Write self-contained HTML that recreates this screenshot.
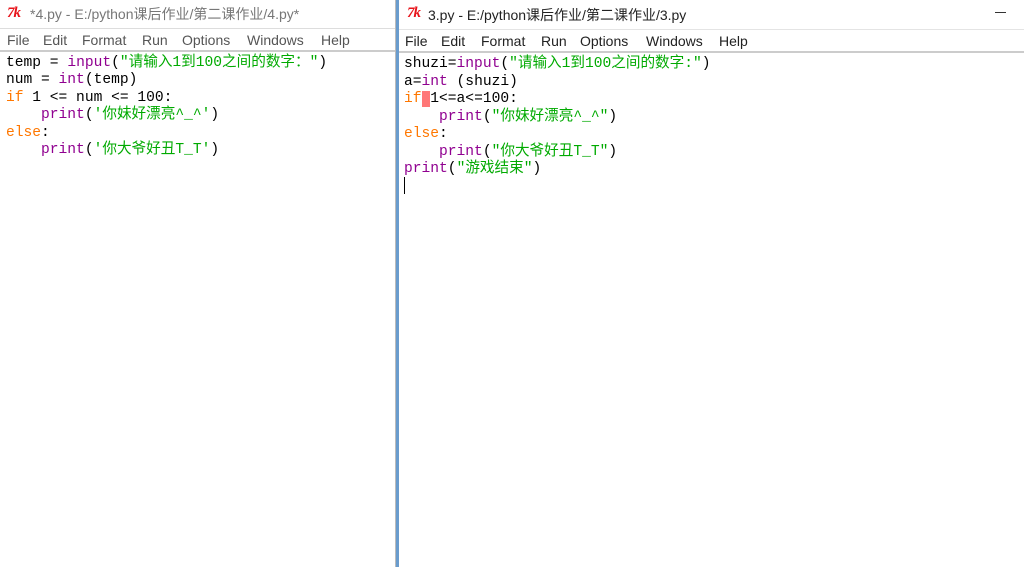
<!DOCTYPE html>
<html><head><meta charset="utf-8"><style>
*{margin:0;padding:0;box-sizing:border-box}
body{width:1024px;height:567px;overflow:hidden;background:#fff;position:relative;font-family:"Liberation Sans","Noto Sans CJK SC",sans-serif}
.win{position:absolute;top:0;height:567px;background:#fff}
.title{position:absolute;left:0;right:0;top:0;height:28px;font-size:14px;color:#222;white-space:nowrap}
.logo{position:absolute;top:5px;color:#e8141b;font-style:italic;font-weight:bold;font-family:"Liberation Serif",serif;font-size:15px;letter-spacing:-1px}
.menu{position:absolute;left:0;right:0;font-size:14px;color:#222;white-space:nowrap}
.menu span{position:absolute;top:3px}
.code{position:absolute;font-family:"Liberation Mono","Noto Sans CJK SC",monospace;white-space:pre;color:#000}
.code div{position:absolute;left:0;height:17px;line-height:17px}
.k{color:#ff7700}.b{color:#900090}.s{color:#00aa00}
</style></head><body>
<div class="win" style="left:0;width:397px;background:#fff">
 <div class="title" style="background:#fff;color:#777"><span class="logo" style="left:7px">7k</span><span style="position:absolute;left:30px;top:4px">*4.py - E:/python课后作业/第二课作业/4.py*</span></div>
 <div style="position:absolute;left:0;right:0;top:28px;height:1px;background:#ddd"></div>
 <div class="menu" style="top:29px;height:21px;background:#fff;color:#555">
  <span style="left:7px">File</span><span style="left:43px">Edit</span><span style="left:82px">Format</span><span style="left:142px">Run</span><span style="left:182px">Options</span><span style="left:247px">Windows</span><span style="left:321px">Help</span>
 </div>
 <div style="position:absolute;left:0;right:0;top:50px;height:2px;background:#ccc"></div>
 <div class="code" style="left:6px;top:55px;font-size:14.6px">
  <div style="top:0">temp = <span class="b">input</span>(<span class="s">"请输入1到100之间的数字："</span>)</div>
  <div style="top:17.4px">num = <span class="b">int</span>(temp)</div>
  <div style="top:34.8px"><span class="k">if</span> 1 &lt;= num &lt;= 100:</div>
  <div style="top:52.2px">    <span class="b">print</span>(<span class="s">'你妹好漂亮^_^'</span>)</div>
  <div style="top:69.6px"><span class="k">else</span>:</div>
  <div style="top:87px">    <span class="b">print</span>(<span class="s">'你大爷好丑T_T'</span>)</div>
 </div>
</div>
<div style="position:absolute;left:395px;top:0;width:1px;height:567px;background:#bbb"></div>
<div style="position:absolute;left:396px;top:0;width:3px;height:567px;background:#6a9ccd"></div>
<div class="win" style="left:399px;width:625px">
 <div class="title"><span class="logo" style="left:8px">7k</span><span style="position:absolute;left:29px;top:5px">3.py - E:/python课后作业/第二课作业/3.py</span></div>
 <div style="position:absolute;left:596px;top:12px;width:11px;height:1px;background:#333"></div>
 <div style="position:absolute;left:0;right:0;top:29px;height:1px;background:#e4e4e4"></div>
 <div class="menu" style="top:30px;height:21px">
  <span style="left:6px">File</span><span style="left:42px">Edit</span><span style="left:82px">Format</span><span style="left:142px">Run</span><span style="left:181px">Options</span><span style="left:247px">Windows</span><span style="left:320px">Help</span>
 </div>
 <div style="position:absolute;left:0;right:0;top:51px;height:2px;background:#ccc"></div>
 <div class="code" style="left:5px;top:56px;font-size:14.6px">
  <div style="top:0">shuzi=<span class="b">input</span>(<span class="s">"请输入1到100之间的数字:"</span>)</div>
  <div style="top:17.5px">a=<span class="b">int</span> (shuzi)</div>
  <div style="top:35px"><span class="k">if</span><span style="background:#f77">&nbsp;</span>1&lt;=a&lt;=100:</div>
  <div style="top:52.5px">    <span class="b">print</span>(<span class="s">"你妹好漂亮^_^"</span>)</div>
  <div style="top:70px"><span class="k">else</span>:</div>
  <div style="top:87.5px">    <span class="b">print</span>(<span class="s">"你大爷好丑T_T"</span>)</div>
  <div style="top:105px"><span class="b">print</span>(<span class="s">"游戏结束"</span>)</div>
 </div>
 <div style="position:absolute;left:5px;top:177px;width:1px;height:17px;background:#000"></div>
</div>
</body></html>
